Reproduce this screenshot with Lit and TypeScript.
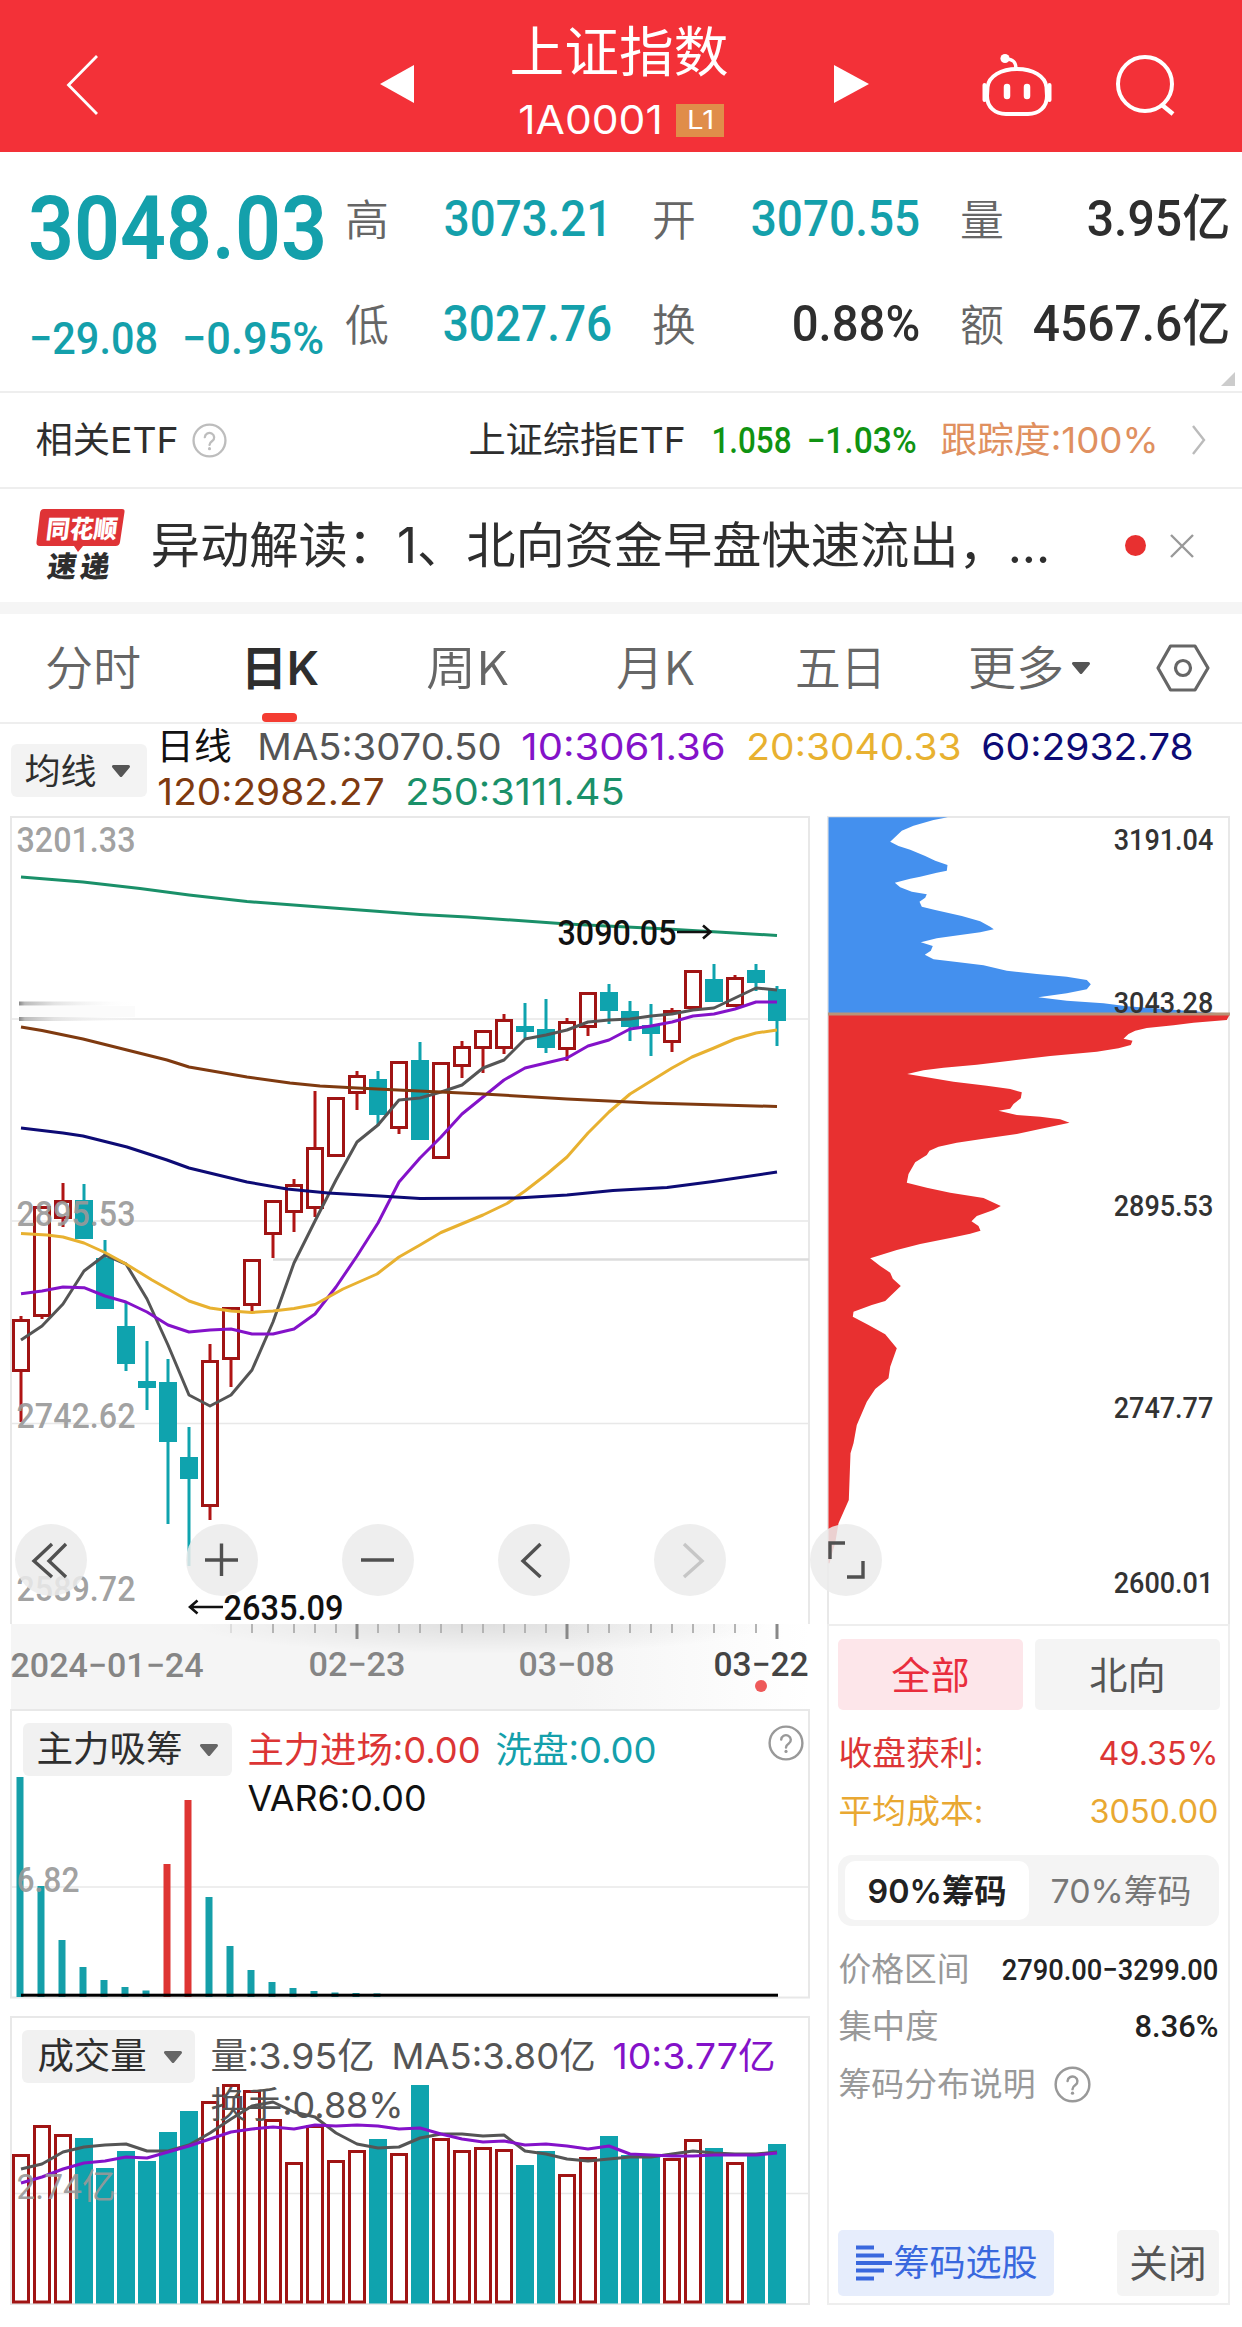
import { LitElement, html, svg, css } from "lit";
import { customElement } from "lit/decorators.js";

/** Sets a single line of text to a given ink width, centred on its cap height. */
const fit = (text: string, w: number, size: number, cls = "", h = Math.round(size * 1.2)) => {
  const pad = size * 0.045;
  return html`<svg class="fit ${cls}" width=${w} height=${h}>
    <text x=${-pad} y=${h / 2 + size * 0.36} font-size=${size} textLength=${w + pad * 2}
      lengthAdjust="spacingAndGlyphs">${text}</text></svg>`;
};

/** Text placed inside a chart by its left ink edge and baseline. */
const mark = (text: string, x: number, y: number, w: number, size: number, cls: string) => svg`
  <text class=${cls} x=${x - size * 0.045} y=${y} font-size=${size}
    textLength=${w + size * 0.09} lengthAdjust="spacingAndGlyphs">${text}</text>`;

const caret = html`<svg class="caret" width="20" height="14" viewBox="0 0 20 14">
  <path d="M2.5 2.5H17.5L10 11.5Z" fill="currentColor" stroke="currentColor" stroke-width="3" stroke-linejoin="round"/></svg>`;

const help = (size: number, cls: string) => html`<svg class="help ${cls}" width=${size} height=${size} viewBox="0 0 36 36">
  <circle cx="18" cy="18" r="16.4" fill="none" stroke="currentColor" stroke-width="2.4"/>
  <path d="M13.2 14.6a4.8 4.6 0 1 1 7.6 3.9c-2 1.4-2.8 2-2.8 4" fill="none" stroke="currentColor" stroke-width="2.4" stroke-linecap="round"/>
  <circle cx="18" cy="26.4" r="1.6" fill="currentColor"/></svg>`;

const shared = css`
  :host { display: block; }
  * { box-sizing: border-box; }
  svg { display: block; flex: none; overflow: visible; }
  .row { display: flex; align-items: center; }
  text { font-family: Inter, "Noto Sans CJK SC", sans-serif; fill: currentColor; white-space: pre; }
  .cjk text { font-family: "Noto Sans CJK SC", sans-serif; font-weight: 350; }
  .firm text { font-weight: 400; }
  .din text, text.din { font-family: Roboto, "Noto Sans CJK SC", sans-serif; }
  .med text, text.med { font-weight: 500; }
  .bold text { font-weight: 600; }
  .teal { color: #14a0ab; }
  .ink { color: #2e2e2e; }
  .black { color: #111; }
  .grey { color: #666; }
  .mid { color: #555; }
  .soft { color: #999; }
  .red { color: #dc3535; }
  .purple { color: #8412c9; }
  .gold { color: #e8b130; }
  .navy { color: #0d0b75; }
  .brown { color: #7f3a10; }
  .green { color: #1a9069; }
  .white { color: #fff; }
`;

@customElement("title-bar")
class TitleBar extends LitElement {
  static styles = [shared, css`
    .bar { height: 152px; background: #f33138; color: #fff; }
    .back { margin-left: 66px; }
    .prev { margin-left: 280px; }
    .next { margin-left: 106px; }
    .bot { margin-left: 112px; }
    .search { margin-left: 62px; }
    .prev, .next { margin-top: 16px; }
    .back, .search, .bot { margin-top: 17px; }
    .names { margin: 7px 0 0 98px; width: 216px; }
    .code { margin: 15px 0 0 8px; gap: 15px; }
    .badge { width: 48px; height: 33px; background: #e08d4a; display: flex; align-items: center; justify-content: center; }
  `];
  render() {
    return html`<div class="bar row">
      <svg class="back" width="34" height="62" viewBox="0 0 34 62"><path d="M31 2 2.5 31 31 60" fill="none" stroke="#fff" stroke-width="2.8"/></svg>
      <svg class="prev" width="34" height="38" viewBox="0 0 34 38"><path d="M34 0V38L0 19Z" fill="#fff"/></svg>
      <div class="names">
        ${fit("上证指数", 214, 54, "cjk firm", 66)}
        <div class="row code">${fit("1A0001", 141, 39, "", 38)}<span class="badge">${fit("L1", 25, 25, "", 30)}</span></div>
      </div>
      <svg class="next" width="35" height="38" viewBox="0 0 35 38"><path d="M0 0V38L35 19Z" fill="#fff"/></svg>
      <svg class="bot" width="72" height="66" viewBox="0 0 72 66" fill="none" stroke="#fff" stroke-width="4">
        <circle cx="24" cy="6.5" r="4.6" fill="#fff" stroke="none"/>
        <path d="M25 7c7 0 10 3 10 10" stroke-width="3.4"/>
        <path d="M36 17C52 17 64 24 65.500 35L66 44C66 55 58 62 47 62H25C14 62 6 55 6 44L6.500 35C8 24 20 17 36 17Z"/>
        <path d="M3.500 33V48M68.500 33V48" stroke-width="4" stroke-linecap="round"/>
        <path d="M26 35V44M46 35V44" stroke-width="6.500" stroke-linecap="round"/></svg>
      <svg class="search" width="62" height="62" viewBox="0 0 62 62" fill="none" stroke="#fff" stroke-width="4">
        <circle cx="30" cy="30" r="27"/><path d="M47 51 58 60" stroke-width="4.500"/></svg>
    </div>`;
  }
}

@customElement("quote-summary")
class QuoteSummary extends LitElement {
  static styles = [shared, css`
    .quote { display: flex; height: 241px; border-bottom: 2px solid #eee; position: relative; }
    .last { width: 346px; padding: 20px 0 0 32px; }
    .delta { margin: 31px 0 0 -1px; gap: 28px; }
    .grid { display: grid; padding-top: 13px; align-content: start; grid-template-rows: 105px 105px;
      grid-template-columns: 43px 221px 43px 43px 222px 43px 43px 224px; }
    .cell { display: flex; align-items: center; justify-content: flex-end; }
    .name { padding: 6px 0 0 1px; justify-content: flex-start; }
    .name.second { grid-column: 4; }
    .name.third { grid-column: 7; }
    .corner { position: absolute; right: 7px; bottom: 5px; }
  `];
  render() {
    const name = (t: string, c = "") => html`<div class="cell name ${c}">${fit(t, 40, 43, "cjk grey")}</div>`;
    const val = (t: string, w: number, c: string) => html`<div class="cell">${fit(t, w, 50, `din med ${c}`)}</div>`;
    return html`<div class="quote">
      <div class="last">
        ${fit("3048.03", 291, 89, "din bold teal", 110)}
        <div class="row delta">${fit("−29.08", 125, 45, "din med teal", 50)}${fit("−0.95%", 138, 45, "din med teal", 50)}</div>
      </div>
      <div class="grid">
        ${name("高")}${val("3073.21", 164, "teal")}${name("开", "second")}${val("3070.55", 165, "teal")}${name("量", "third")}${val("3.95亿", 139, "ink")}
        ${name("低")}${val("3027.76", 165, "teal")}${name("换", "second")}${val("0.88%", 124, "ink")}${name("额", "third")}${val("4567.6亿", 193, "ink")}
      </div>
      <svg class="corner" width="14" height="14"><path d="M14 0V14H0Z" fill="#ccc"/></svg>
    </div>`;
  }
}

@customElement("etf-row")
class EtfRow extends LitElement {
  static styles = [shared, css`
    .etf { height: 96px; border-bottom: 2px solid #eee; padding-left: 37px; }
    .help { margin-left: 15px; color: #bdbdbd; }
    .fund { margin-left: 243px; }
    .price { margin-left: 29px; }
    .pct { margin-left: 18px; }
    .track { margin-left: 27px; color: #e0905f; }
    .price, .pct { color: #109312; }
    .go { margin-left: 35px; }
  `];
  render() {
    return html`<div class="etf row">
      ${fit("相关ETF", 140, 36, "ink")}${help(35, "")}
      ${fit("上证综指ETF", 214, 36, "ink fund")}
      ${fit("1.058", 77, 36, "din med price")}${fit("−1.03%", 107, 36, "din med pct")}
      ${fit("跟踪度:100%", 215, 36, "track")}
      <svg class="go" width="14" height="30" viewBox="0 0 14 30"><path d="M1 1 12 15 1 29" fill="none" stroke="#bbb" stroke-width="2.400"/></svg>
    </div>`;
  }
}

@customElement("news-row")
class NewsRow extends LitElement {
  static styles = [shared, css`
    .news { height: 125px; border-bottom: 12px solid #f5f5f5; padding-left: 36px; }
    .logo text { font-family: "Noto Sans CJK SC", sans-serif; font-weight: 900; }
    .msg { margin-left: 27px; }
    .dot { width: 21px; height: 21px; border-radius: 50%; background: #e83030; margin-left: 77px; }
    .x { margin-left: 24px; }
  `];
  render() {
    return html`<div class="news row">
      <svg class="logo" width="90" height="76" viewBox="0 0 90 76">
        <path d="M8 1H86Q89 1 88.500 4L84 34Q83.500 38 79.500 38H47L42 44 38 38H4Q0 38 .500 34L4 5Q4.500 1 8 1Z" fill="#df3336"/>
        <g transform="translate(2 0) skewX(-7)"><text x="11" y="30" font-size="25" textLength="71" lengthAdjust="spacingAndGlyphs" class="white">同花顺</text></g>
        <g transform="translate(8 0) skewX(-8)"><text x="12" y="69" font-size="29" textLength="62" class="ink">速递</text></g>
      </svg>
      ${fit("异动解读：1、北向资金早盘快速流出，...", 895, 49, "ink msg")}
      <span class="dot"></span>
      <svg class="x" width="24" height="24" viewBox="0 0 24 24"><path d="M1 1 23 23M23 1 1 23" stroke="#999" stroke-width="2.400"/></svg>
    </div>`;
  }
}

@customElement("period-tabs")
class PeriodTabs extends LitElement {
  static styles = [shared, css`
    .tabs { height: 110px; border-bottom: 2px solid #eee; display: grid; align-items: center; padding-left: 47px;
      grid-template-columns: 195px 186px 190px 179px 173px 186px 60px; }
    .tab { height: 108px; display: flex; align-items: center; gap: 9px; }
    .on { width: 76px; flex-direction: column; gap: 0; padding-top: 28px; justify-content: space-between; }
    .line { width: 35px; height: 9px; border-radius: 4px; background: #f43c32; margin-right: 2px; }
    .caret { color: #555; }
  `];
  render() {
    return html`<div class="tabs">
      <div class="tab">${fit("分时", 92, 47, "cjk grey")}</div>
      <div class="tab on">${fit("日K", 74, 47, "bold ink", 52)}<span class="line"></span></div>
      <div class="tab">${fit("周K", 78, 47, "cjk grey")}</div>
      <div class="tab">${fit("月K", 74, 47, "cjk grey")}</div>
      <div class="tab">${fit("五日", 87, 47, "cjk grey")}</div>
      <div class="tab">${fit("更多", 92, 47, "cjk grey")}${caret}</div>
      <svg width="54" height="48" viewBox="0 0 54 48" fill="none" stroke="#666" stroke-width="3.200" stroke-linejoin="round">
        <path d="M14.500 2H39L52 24 39 46H14.500L2 24Z"/><circle cx="27" cy="24" r="7.500"/></svg>
    </div>`;
  }
}

@customElement("ma-legend")
class MaLegend extends LitElement {
  static styles = [shared, css`
    .legend { height: 92px; display: flex; padding-left: 11px; }
    .pick { width: 136px; height: 53px; margin-top: 20px; border-radius: 6px; background: #f3f3f3; padding-left: 15px; gap: 16px; color: #555; }
    .lines { padding: 0 0 0 11px; }
    .first, .second { height: 45px; gap: 23.500px; }
    .period { margin-right: 5px; }
    .second { margin-left: 1px; }
  `];
  render() {
    return html`<div class="legend">
      <div class="pick row">${fit("均线", 69, 35, "ink")}${caret}</div>
      <div class="lines">
        <div class="row first">${fit("日线", 72, 37, "black period")}${fit("MA5:3070.50", 241, 37, "mid")}${fit("10:3061.36", 201, 37, "purple")}
          ${fit("20:3040.33", 212, 37, "gold")}${fit("60:2932.78", 209, 37, "navy")}</div>
        <div class="row second">${fit("120:2982.27", 224, 37, "brown")}${fit("250:3111.45", 216, 37, "green")}</div>
      </div>
    </div>`;
  }
}

const STEP = 21;
const X0 = 21;

/* [rising, body top, body bottom, high, low] */
const CANDLES: [number, number, number, number, number][] = [
  [1, 1319, 1372, 1316, 1422], [1, 1206, 1317, 1206, 1319], [1, 1200, 1219, 1183, 1227], [0, 1200, 1239, 1184, 1239],
  [0, 1258, 1309, 1240, 1309], [0, 1326, 1364, 1303, 1371], [0, 1381, 1388, 1341, 1410], [0, 1382, 1442, 1359, 1524],
  [0, 1457, 1479, 1427, 1566], [1, 1360, 1507, 1344, 1520], [1, 1307, 1360, 1307, 1387], [1, 1259, 1306, 1259, 1311],
  [1, 1200, 1235, 1200, 1258], [1, 1184, 1213, 1179, 1232], [1, 1147, 1209, 1091, 1217], [1, 1097, 1157, 1097, 1157],
  [1, 1075, 1094, 1071, 1110], [0, 1079, 1115, 1071, 1126], [1, 1061, 1129, 1061, 1134], [0, 1060, 1140, 1042, 1140],
  [1, 1062, 1159, 1062, 1159], [1, 1046, 1067, 1041, 1078], [1, 1030, 1049, 1030, 1073], [1, 1019, 1049, 1014, 1054],
  [0, 1026, 1032, 1003, 1038], [0, 1029, 1048, 999, 1053], [1, 1021, 1050, 1018, 1061], [1, 992, 1028, 992, 1036],
  [0, 992, 1011, 984, 1024], [0, 1011, 1027, 1001, 1041], [0, 1025, 1034, 1004, 1056], [1, 1010, 1043, 1008, 1052],
  [1, 970, 1009, 970, 1009], [0, 979, 1002, 964, 1002], [1, 977, 1007, 975, 1007], [0, 970, 983, 964, 991],
  [0, 989, 1021, 986, 1046],
];

const MA250 = "21,877 83,882 140,888.500 189,895 247,901.500 333,908 420,914.500 467,917 567,924 667,929 777,935.500";
const MA120 = "21,1027 42,1030.500 83,1039 127,1050 167,1060 189,1067 247,1077 290,1083 320,1086 357,1088 398,1090 483,1094 567,1099 650,1103 777,1106.500";
const MA60 = "21,1128 63,1133 83,1136 127,1147 167,1160 189,1168 247,1182 287,1189 328,1193 380,1196 420,1198.500 517,1198 567,1195 613,1190.500 667,1187.500 713,1181.500 777,1172";
const MA20 = "21,1233.500 47,1235 63,1237 84,1243 105,1252.500 126,1264 152,1280 189,1301 210,1308 231,1311 252,1312.500 273,1311 294,1308.500 315,1304.500 343,1289 377,1274 399,1257 420,1245 441,1232.500 483,1215 507,1203.500 525,1191 547,1174 567,1157 588,1133 609,1112 630,1094 651,1081 672,1068 692,1057 714,1048 735,1039 756,1033 777,1030";
const MA10 = [1293.7, 1291, 1287, 1287.7, 1296, 1302, 1312, 1325, 1332, 1330, 1329, 1334, 1334, 1329, 1314, 1287, 1256, 1223, 1182, 1158, 1137, 1114, 1097, 1080, 1068, 1063, 1058, 1046, 1040, 1029, 1026, 1022, 1016, 1014, 1009, 1002, 1002];
const MA5 = [1340, 1326, 1304, 1271, 1255, 1264, 1299, 1345, 1395, 1406, 1395, 1370, 1322, 1263, 1221, 1180, 1142, 1125, 1100, 1098, 1092, 1085, 1068, 1060, 1039, 1035, 1030, 1022, 1020, 1019, 1016, 1014, 1010, 1008, 998, 988, 990];
const series = (ys: number[]) => ys.map((y, i) => `${X0 + i * STEP},${y}`).join(" ");

const chartStyles = css`
  .grid { stroke: #e8e8e8; stroke-width: 1.500; }
  .frame { fill: none; stroke: #e8e8e8; stroke-width: 2; }
  .up { fill: none; stroke: #a01414; stroke-width: 3; }
  .down { fill: #0fa3ae; }
  .wick { fill: #0fa3ae; }
  .wick.rise { fill: #b01414; }
  .ma { fill: none; stroke: currentColor; stroke-width: 3; stroke-linejoin: round; }
  .scale { color: #999; fill-opacity: 0.92; }
`;

@customElement("candle-chart")
class CandleChart extends LitElement {
  static styles = [shared, chartStyles, css`
    .holder { position: relative; }
    .tools { position: absolute; left: 4px; top: 708px; display: flex; gap: 84px; z-index: 2; }
    .tool { width: 72px; height: 72px; border-radius: 50%; background: rgba(235, 235, 235, 0.86); }
    .wide { margin-right: 15px; }
    .off { opacity: 0.25; }
    .date { color: #858585; }
    .now { color: #444; }
  `];
  render() {
    const icon = (d: string, cls = "", off = "") => html`<span class="tool ${cls}"><svg class=${off} width="72" height="72" viewBox="0 0 72 72"
      fill="none" stroke="#505050" stroke-width="3.400"><path d=${d}/></svg></span>`;
    const ticks = Array.from({ length: 27 }, (_, i) => 231 + i * STEP);
    return html`<div class="holder">
      <svg width="799" height="893" viewBox="11 816 799 893">
        <defs>
          <linearGradient id="fade"><stop offset="0" stop-color="#f5f5f5"/><stop offset=".7" stop-color="#f5f5f5"/><stop offset="1" stop-color="#fff"/></linearGradient>
          <radialGradient id="shade" cx=".5" cy="0" r=".5"><stop offset="0" stop-color="#000" stop-opacity=".09"/><stop offset="1" stop-color="#000" stop-opacity="0"/></radialGradient>
          <linearGradient id="smear"><stop offset="0" stop-color="#888"/><stop offset=".05" stop-color="#bbb"/><stop offset=".3" stop-color="#e2e2e2"/><stop offset="1" stop-color="#fff" stop-opacity="0"/></linearGradient>
        </defs>
        <path class="frame" d="M11 1624V817H809V1624"/>
        <path class="grid" d="M12 1019H809M12 1221H809M12 1423.500H809"/>
        <path d="M273 1259.500H809" stroke="#dcdcdc" stroke-width="2.500"/>
        <rect x="19" y="1001.500" width="116" height="4" fill="url(#smear)"/>
        <rect x="19" y="1006" width="116" height="11" fill="#888" opacity=".03"/>
        <rect x="19" y="1017" width="116" height="4" fill="url(#smear)"/>
        ${CANDLES.map(([up, t, b, h, l], i) => {
          const x = X0 + i * STEP;
          return svg`<rect class="wick ${up ? "rise" : ""}" x=${x - 1.5} y=${h} width="3" height=${up ? Math.max(0, t - h) : l - h}/>
            ${up ? svg`<rect class="wick rise" x=${x - 1.5} y=${b} width="3" height=${Math.max(0, l - b)}/>
              <rect class="up" x=${x - 7.5} y=${t + 1.5} width="15" height=${b - t - 3}/>`
              : svg`<rect class="down" x=${x - 9} y=${t} width="18" height=${b - t}/>`}`;
        })}
        <polyline class="ma mid" points=${series(MA5)}/>
        <polyline class="ma purple" points=${series(MA10)}/>
        <polyline class="ma gold" points=${MA20}/>
        <polyline class="ma navy" points=${MA60}/>
        <polyline class="ma brown" points=${MA120}/>
        <polyline class="ma green" points=${MA250}/>
        ${mark("3201.33", 18, 852, 116, 34.5, "din scale med")}
        ${mark("2895.53", 18, 1226, 116, 34.5, "din scale med")}
        ${mark("2742.62", 18, 1428, 116, 34.5, "din scale med")}
        ${mark("2589.72", 18, 1600.5, 116, 34.5, "din scale med")}
        ${mark("3090.05", 559, 944.5, 116, 35, "din med black")}
        <path d="M677 932H710M703 925.500 710.500 932 703 938.500" fill="none" stroke="#111" stroke-width="2.600"/>
        ${mark("2635.09", 225, 1619.5, 117, 35, "din med black")}
        <path d="M223 1607H190M197.500 1600.500 190 1607 197.500 1613.500" fill="none" stroke="#111" stroke-width="2.600"/>
        <rect x="11" y="1624" width="799" height="85" fill="url(#fade)"/>
        <rect x="191" y="1624" width="580" height="60" fill="url(#shade)"/>
        ${ticks.map((x) => {
          const major = (x - 357) % 210 === 0;
          return svg`<rect x=${x - (major ? 1.5 : 1)} y="1624" width=${major ? 3 : 2} height=${major ? 15 : 9} fill=${major ? "#888" : x < 250 ? "#ddd" : "#b4b4b4"}/>`;
        })}
        ${mark("2024−01−24", 12, 1677, 190, 34, "din date med")}
        ${mark("02−23", 310, 1676, 94, 34, "din date med")}
        ${mark("03−08", 520, 1676, 93, 34, "din date med")}
        ${mark("03−22", 715, 1676, 92, 34, "din now med")}
        <circle cx="761" cy="1686" r="6" fill="#ee5a5a"/>
      </svg>
      <div class="tools">
        ${icon("M37 20 19 37 37 53M51 20 34 37 51 53", "wide")}
        ${icon("M19 36H52M35.500 19.500V52")}
        ${icon("M19 36H52")}
        ${icon("M42.500 20 25 37 42.500 53")}
        ${icon("M30 20 48 37 30 53", "", "off")}
        ${icon("M20 35V19H35M53 37V53H37")}
      </div>
    </div>`;
  }
}

const panelStyles = css`
  .panel { display: grid; }
  .panel > * { grid-area: 1 / 1; }
  .head { display: flex; padding: 14px 6px 0 12px; align-items: flex-start; }
  .pick { height: 53px; border-radius: 6px; background: #f1f1f1; color: #666; }
  .vals { margin: 2px 0 0 17px; }
  .vals .row { height: 49px; }
`;

@customElement("force-panel")
class ForcePanel extends LitElement {
  static styles = [shared, chartStyles, panelStyles, css`
    .pick { width: 209px; padding-left: 15px; gap: 18px; }
    .vals { margin-top: 3px; }
    .vals .row { gap: 18px; height: 48px; }
    .help { margin: 2px 0 0 auto; color: #999; }
  `];
  render() {
    const tops = [1777, 1886, 1940, 1967, 1980, 1987, 1990.5, 1864, 1800, 1897, 1946, 1970, 1982, 1988, 1991, 1992.5, 1993, 1993.4];
    return html`<div class="panel">
      <svg width="799" height="289" viewBox="11 1709 799 289">
        <rect class="frame" x="11" y="1710" width="798" height="287.500"/>
        <path class="grid" d="M12 1887H809"/>
        ${tops.map((y, i) => svg`<rect x=${16.500 + i * STEP} y=${y} width="7" height=${1997 - y} fill=${i === 7 || i === 8 ? "#de3533" : "#159fa9"}/>`)}
        <rect x="21" y="1993.700" width="757" height="3" fill="#000"/>
        ${mark("6.82", 18, 1892, 60, 34.5, "din scale med")}
      </svg>
      <div class="head">
        <div class="pick row">${fit("主力吸筹", 143, 36, "ink")}${caret}</div>
        <div class="vals">
          <div class="row">${fit("主力进场:0.00", 230, 36, "red")}${fit("洗盘:0.00", 158, 36, "teal")}</div>
          <div class="row">${fit("VAR6:0.00", 176, 36, "black")}</div>
        </div>
        ${help(36, "")}
      </div>
    </div>`;
  }
}

/* [rising, top of the bar] */
const VOLUMES: [number, number][] = [
  [1, 2154], [1, 2125], [1, 2134], [0, 2138], [0, 2168], [0, 2151], [0, 2161], [0, 2132], [0, 2111], [1, 2101], [1, 2084], [1, 2090],
  [1, 2119], [1, 2162], [1, 2125], [1, 2160], [1, 2150], [0, 2139], [1, 2153], [0, 2085], [1, 2138], [1, 2150], [1, 2147], [1, 2149],
  [0, 2165], [0, 2151], [1, 2174], [1, 2157], [0, 2136], [0, 2155], [0, 2157], [1, 2158], [1, 2139], [0, 2148], [1, 2162], [0, 2155], [0, 2144],
];
const VMA5 = [2169, 2164, 2152, 2147, 2145, 2144, 2151, 2151, 2145, 2133, 2119, 2106, 2102, 2112, 2117, 2133, 2144, 2148, 2147, 2138, 2134, 2134, 2136, 2135, 2151, 2154, 2159, 2161, 2159, 2157, 2157, 2154, 2151, 2153, 2154, 2154, 2152];
const VMA10 = [2183, 2177, 2169, 2163, 2161, 2157, 2158, 2152, 2146, 2139, 2132, 2129, 2127, 2129, 2125, 2126, 2125, 2126, 2129, 2128, 2134, 2139, 2142, 2141, 2145, 2144, 2146, 2149, 2146, 2154, 2155, 2156, 2156, 2155, 2155, 2155, 2153];

@customElement("volume-panel")
class VolumePanel extends LitElement {
  static styles = [shared, chartStyles, panelStyles, css`
    .panel { margin-top: 18px; }
    .head { padding-left: 11px; }
    .pick { width: 173px; padding-left: 17px; gap: 18px; }
    .vals .row { gap: 20px; }
  `];
  render() {
    return html`<div class="panel">
      <svg width="799" height="289" viewBox="11 2016 799 289">
        <rect class="frame" x="11" y="2017" width="798" height="287"/>
        <path class="grid" d="M12 2193.500H809"/>
        ${VOLUMES.map(([up, y], i) => {
          const x = X0 + i * STEP;
          return up ? svg`<rect class="up" x=${x - 7.5} y=${y + 1.500} width="15" height=${2302 - y - 1.500}/>`
            : svg`<rect class="down" x=${x - 9} y=${y} width="18" height=${2303.5 - y}/>`;
        })}
        <polyline class="ma mid" points=${series(VMA5)}/>
        <polyline class="ma purple" points=${series(VMA10)}/>
        ${mark("2.74亿", 18, 2199, 96, 35, "din scale")}
      </svg>
      <div class="head">
        <div class="pick row">${fit("成交量", 106, 36, "ink")}${caret}</div>
        <div class="vals">
          <div class="row">${fit("量:3.95亿", 161, 36, "mid")}${fit("MA5:3.80亿", 201, 36, "mid")}${fit("10:3.77亿", 160, 36, "purple")}</div>
          <div class="row">${fit("换手:0.88%", 190, 36, "mid")}</div>
        </div>
      </div>
    </div>`;
  }
}

/* Outline of the cost distribution: [width of the bar, depth], in thirds of a pixel */
const ABOVE = [358,52, 315,60, 255,77, 220,92, 185,125, 210,138, 245,149, 290,168, 320,182, 357,195, 355,212, 325,218, 275,230, 245,236, 199,248, 215,262, 250,275, 295,283, 290,293, 273,305, 280,320, 320,330, 400,348, 455,364, 485,380, 496,388, 455,397, 395,405, 325,415, 277,427, 313,438, 307,452, 289,464, 315,478, 385,486, 465,496, 535,512, 625,522, 715,530, 775,540, 787,553, 775,568, 715,580, 629,592, 715,602, 825,610, 895,619, 1005,627, 1125,636, 1203,642];
const BELOW = [1203,645, 1195,660, 1095,668, 1035,676, 955,684, 920,692, 900,702, 885,716, 912,722, 907,735, 870,745, 805,755, 665,768, 545,782, 445,794, 345,803, 285,811, 236,822, 295,832, 375,845, 475,857, 545,867, 580,877, 577,895, 555,912, 545,926, 510,932, 565,945, 635,950, 695,958, 723,968, 645,985, 565,1002, 465,1016, 385,1028, 330,1040, 303,1052, 295,1065, 260,1087, 250,1105, 240,1122, 235,1148, 295,1163, 365,1178, 465,1194, 517,1218, 495,1230, 445,1248, 429,1264, 450,1278, 456,1292, 425,1301, 365,1314, 275,1332, 205,1350, 125,1375, 155,1398, 185,1418, 193,1436, 217,1458, 170,1503, 130,1515, 75,1535, 73,1550, 120,1575, 170,1603, 205,1645, 185,1700, 180,1735, 140,1767, 115,1805, 85,1875, 75,1930, 66,1960, 61,2100, 30,2170, 20,2230, 11,2260, 3,2290];
const outline = (v: number[]) => {
  const pts: string[] = [`828.5,${800 + v[1] / 3}`];
  for (let i = 0; i < v.length; i += 2) pts.push(`${(828.5 + v[i] / 3).toFixed(1)},${(800 + v[i + 1] / 3).toFixed(1)}`);
  pts.push(`828.5,${800 + v[v.length - 1] / 3}`);
  return pts.join(" ");
};

@customElement("cost-panel")
class CostPanel extends LitElement {
  static styles = [shared, chartStyles, css`
    .info { width: 403px; height: 681px; border: 2px solid #eee; padding: 13px 9px 0 9px; }
    .btn { height: 71px; border-radius: 5px; background: #f4f4f4; display: flex; align-items: center; justify-content: center; }
    .two { display: grid; grid-template-columns: 185px 185px; gap: 12px; }
    .hot { background: #fde6ea; color: #e92d3d; }
    .line { display: flex; justify-content: space-between; align-items: center; height: 57px; padding: 0 2px; }
    .profit { margin-top: 14px; }
    .amber { color: #e9a832; height: 59px; }
    .seg { height: 71px; background: #f4f4f4; border-radius: 14px; padding: 6px 7px; margin: 15px 0 14px; display: grid; grid-template-columns: 184px 1fr; }
    .opt { display: flex; align-items: center; justify-content: center; }
    .sel { background: #fff; border-radius: 10px; color: #222; }
    .opt.dim { color: #777; }
    .note { justify-content: flex-start; gap: 20px; height: 60px; }
    .help { color: #999; }
    .foot { display: flex; justify-content: space-between; margin-top: 116px; }
    .pickstock { width: 216px; height: 66px; background: #e6edfc; color: #3968de; gap: 3px; }
    .close { width: 102px; height: 66px; color: #555; }
    .num { color: #333; }
    .dark { color: #222; }
  `];
  render() {
    const labels: [string, number][] = [["3191.04", 850], ["3043.28", 1013], ["2895.53", 1215.5], ["2747.77", 1418], ["2600.01", 1593]];
    return html`
      <svg width="403" height="808" viewBox="827 816 403 808">
        <path class="frame" d="M828 1624V817H1229V1624"/>
        <polygon points=${outline(ABOVE)} fill="#4490ee"/>
        <polygon points=${outline(BELOW)} fill="#e83030"/>
        <rect x="828" y="1012.500" width="402" height="3" fill="#b89478"/>
        ${labels.map(([t, y]) => mark(t, 1115, y, 97, 29.5, "din med num"))}
      </svg>
      <div class="info">
        <div class="two">
          <div class="btn hot">${fit("全部", 75, 38, "")}</div>
          <div class="btn mid">${fit("北向", 73, 38, "")}</div>
        </div>
        <div class="line profit red">${fit("收盘获利:", 142, 33)}${fit("49.35%", 117, 32)}</div>
        <div class="line amber">${fit("平均成本:", 142, 33)}${fit("3050.00", 126, 32)}</div>
        <div class="seg">
          <div class="opt sel">${fit("90%筹码", 136, 33, "bold")}</div>
          <div class="opt dim">${fit("70%筹码", 138, 33)}</div>
        </div>
        <div class="line soft">${fit("价格区间", 128, 33)}${fit("2790.00−3299.00", 214, 30, "din med dark")}</div>
        <div class="line soft">${fit("集中度", 97, 33)}${fit("8.36%", 81, 31, "din med dark")}</div>
        <div class="line soft note">${fit("筹码分布说明", 194, 33)}${help(37, "")}</div>
        <div class="foot">
          <div class="btn pickstock">
            <svg width="36" height="36" viewBox="0 0 36 36" stroke="#3968de" stroke-width="3.800"><path d="M0 2.500H18M0 10.500H28M0 18H36M0 25.500H28M0 33.500H18"/></svg>
            ${fit("筹码选股", 141, 36)}
          </div>
          <div class="btn close">${fit("关闭", 74, 38)}</div>
        </div>
      </div>`;
  }
}

@customElement("app-root")
class AppRoot extends LitElement {
  static styles = css`
    :host { display: block; width: 1242px; height: 2327px; background: #fff; overflow: hidden; }
    .body { display: grid; grid-template-columns: 799px 403px; column-gap: 17px; padding-left: 11px; }
  `;
  render() {
    return html`
      <title-bar></title-bar>
      <quote-summary></quote-summary>
      <etf-row></etf-row>
      <news-row></news-row>
      <period-tabs></period-tabs>
      <ma-legend></ma-legend>
      <div class="body">
        <div><candle-chart></candle-chart><force-panel></force-panel><volume-panel></volume-panel></div>
        <cost-panel></cost-panel>
      </div>`;
  }
}
